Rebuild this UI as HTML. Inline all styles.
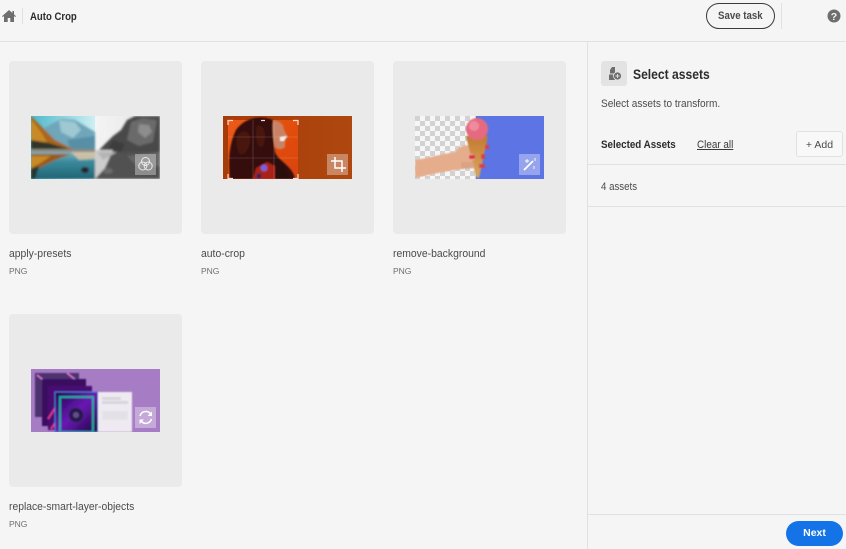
<!DOCTYPE html>
<html><head><meta charset="utf-8"><style>
html,body{margin:0;padding:0;background:#f5f5f5}
body{width:846px;height:549px;position:relative;overflow:hidden;font-family:"Liberation Sans",sans-serif;color:#2c2c2c}
.a{position:absolute;white-space:nowrap;transform-origin:0 0}
.card{position:absolute;width:173px;height:173px;background:#eaeaea;border-radius:4px}
.nm{font-size:11px;color:#4b4b4b;line-height:14px;transform:scaleX(.945)}
.ty{font-size:8.5px;color:#6e6e6e;line-height:10px}
.ln{position:absolute;background:#e1e1e1}
svg{position:absolute;overflow:hidden}
</style></head><body>
<div class="ln" style="left:0;top:41px;width:846px;height:1px"></div>
<div class="ln" style="left:587px;top:42px;width:1px;height:507px"></div>
<div class="ln" style="left:22px;top:8px;width:1px;height:16px"></div>
<div class="ln" style="left:781px;top:3px;width:1px;height:26px"></div>
<svg style="left:2px;top:10px" width="14" height="12" viewBox="0 0 14 12"><path fill="#6e6e6e" d="M7 0 0 6.200 .8 7 2 6V12H5.700V8H8.300V12H12V6L13.200 7 14 6.200 12 4.400V1H10.400V3Z"/></svg>
<div class="a" style="left:30px;top:10px;font-size:11px;line-height:14px;font-weight:bold;color:#2c2c2c;transform:scaleX(.87)">Auto Crop</div>
<div class="a" style="left:706px;top:3px;width:67px;height:24px;border:1px solid #3a3a3a;border-radius:13px"></div>
<div class="a" style="left:718px;top:9px;font-size:11px;line-height:14px;font-weight:bold;color:#4b4b4b;transform:scaleX(.88)">Save task</div>
<svg style="left:827px;top:9px" width="14" height="14" viewBox="0 0 14 14"><circle cx="7" cy="7" r="6.500" fill="#6e6e6e"/><text x="7" y="11" font-size="10.500" font-weight="bold" text-anchor="middle" fill="#f5f5f5" font-family="Liberation Sans">?</text></svg>

<div class="card" style="left:9px;top:61px"></div>
<div class="card" style="left:201px;top:61px"></div>
<div class="card" style="left:393px;top:61px"></div>
<div class="card" style="left:9px;top:314px"></div>

<!-- image 1 -->
<svg style="left:31px;top:116px" width="129" height="63" viewBox="0 0 129 63">
<defs><linearGradient id="sky" x1="0" y1="0" x2="1" y2="0"><stop offset="0" stop-color="#4db8cc"/><stop offset="1" stop-color="#cdeff2"/></linearGradient>
<linearGradient id="wat" x1="0" y1="0" x2="0" y2="1"><stop offset="0" stop-color="#8fbcc4"/><stop offset=".4" stop-color="#3a8a9c"/><stop offset="1" stop-color="#1f6474"/></linearGradient>
<linearGradient id="gs" x1="0" y1="0" x2="1" y2="0"><stop offset="0" stop-color="#f4f4f4"/><stop offset="1" stop-color="#e4e4e4"/></linearGradient>
<filter id="b1" x="-5%" y="-5%" width="110%" height="110%"><feGaussianBlur stdDeviation="1"/></filter><filter id="bi"><feGaussianBlur stdDeviation=".3"/></filter></defs>
<rect width="64" height="63" fill="url(#sky)"/>
<rect x="64" width="65" height="63" fill="url(#gs)"/>
<g filter="url(#b1)">
<path d="M10 14 20 8 30 3 44 4 54 10 64 16V35H10Z" fill="#6fa6ba"/>
<path d="M28 4 44 6 50 14 42 22 30 16Z" fill="#9ec8d2"/>
<path d="M36 24 64 20V34H40Z" fill="#568fa6"/>
<path d="M0 0 10 10 24 24 42 33H0Z" fill="#a8661a"/>
<path d="M0 3 10 16 16 26 0 26Z" fill="#c98a26"/>
<path d="M0 24 18 27 38 33 0 35Z" fill="#33352a"/>
<rect y="34" width="64" height="29" fill="url(#wat)"/>
<rect y="33" width="64" height="3" fill="#8c8a80"/>
<path d="M0 38H40L24 44 12 50 0 56Z" fill="#9a5a18"/>
<path d="M0 40 20 40 8 48 0 52Z" fill="#c88a26"/>
<path d="M0 53 8 50 4 63H0Z" fill="#26342f"/>
<path d="M40 36H64V43L48 44Z" fill="#e3c8a8" opacity=".8"/>
<ellipse cx="54" cy="54" rx="4" ry="3" fill="#2b2226"/>
<path d="M66 36 74 28 82 20 90 14 96 4 104 0H129V36Z" fill="#484848"/>
<path d="M100 6 112 2 126 4 122 26 108 30 96 24Z" fill="#6a6a6a"/>
<path d="M108 8l10 1 3 7-7 6-7-6Z" fill="#8d8d8d"/>
<path d="M82 24l12 4-4 8H76Z" fill="#3c3c3c"/>
<rect x="64" y="36" width="65" height="27" fill="#515151"/>
<path d="M64 34H82L74 52 64 63Z" fill="#cdcdcd"/>
<path d="M66 36H86L72 44Z" fill="#b5b5b5"/>
<path d="M96 40 129 36V50L108 52Z" fill="#666"/>
<ellipse cx="77" cy="55" rx="5" ry="3" fill="#6a6a6a"/>
</g>
<rect x="104" y="38" width="21" height="21" fill="#fff" opacity=".35"/>
<g filter="url(#bi)" fill="none" stroke="#fff" stroke-width="1" opacity=".8"><circle cx="114.500" cy="45.500" r="4"/><circle cx="111.800" cy="50" r="4"/><circle cx="117.200" cy="50" r="4"/></g>
</svg>

<!-- image 2 -->
<svg style="left:223px;top:116px" width="129" height="63" viewBox="0 0 129 63">
<defs><linearGradient id="or" x1="0" y1="0" x2="1" y2="0"><stop offset="0" stop-color="#a83c08"/><stop offset="1" stop-color="#ae4710"/></linearGradient>
<linearGradient id="pn" x1="0" y1="0" x2="1" y2="1"><stop offset="0" stop-color="#ee5a14"/><stop offset="1" stop-color="#d8420c"/></linearGradient>
<filter id="b2" x="-5%" y="-5%" width="110%" height="110%"><feGaussianBlur stdDeviation=".9"/></filter><filter id="bj"><feGaussianBlur stdDeviation=".3"/></filter></defs>
<rect width="129" height="63" fill="url(#or)"/>
<rect x="5" y="4" width="70" height="59" fill="url(#pn)" filter="url(#bj)"/>
<g filter="url(#b2)">
<path d="M7 63C5 46 6 28 13 14 22 1 38-1 50 4 50 14 50 26 52 36 54 44 70 50 72 63Z" fill="#351108"/>
<path d="M14 20C22 10 30 18 26 30 20 44 12 40 14 20ZM34 10C42 8 44 20 40 30 34 34 32 20 34 10Z" fill="#4a160a"/>
<path d="M50 5C56 4 61 8 61 14L65 21 62 24 62 31C58 35 54 33 52 31 50 22 49 13 50 5Z" fill="#c98264"/>
<path d="M57 21l7-1-3 5-4 0z" fill="#f6ecec"/>
<path d="M30 63 33 52 44 46 52 50 54 63Z" fill="#a92312"/>
<circle cx="41" cy="52" r="3.500" fill="#7d5fd4"/>
<circle cx="36" cy="60" r="2.500" fill="#302060"/>
<path d="M52 40 60 48 66 63H52Z" fill="#2a0a08"/>
</g>
<g stroke="#fff" stroke-width=".6" opacity=".25"><path d="M5 21H75M5 42H75M30 4V63M51 4V63"/></g>
<g filter="url(#bj)"><path d="M5 9V4.500H10M70 4.500H75V9M5 58V62.500H10M75 58V62.500H70M38 4.500H42" fill="none" stroke="#f5dcd0" stroke-width="1.200"/></g>
<rect x="104" y="38" width="21" height="21" fill="#fff" opacity=".35"/>
<path filter="url(#bj)" d="M108 45H119V56M112 41V52H123" fill="none" stroke="#fff" stroke-width="1.500"/>
</svg>

<!-- image 3 -->
<svg style="left:415px;top:116px" width="129" height="63" viewBox="0 0 129 63">
<defs><pattern id="chk" width="10" height="10" patternUnits="userSpaceOnUse"><rect width="10" height="10" fill="#f6f6f6"/><rect width="5" height="5" fill="#d2d2d2"/><rect x="5" y="5" width="5" height="5" fill="#d2d2d2"/></pattern>
<linearGradient id="cone" x1="0" y1="0" x2="0" y2="1"><stop offset="0" stop-color="#c47a30"/><stop offset="1" stop-color="#d8a860"/></linearGradient>
<filter id="b3" x="-5%" y="-5%" width="110%" height="110%"><feGaussianBlur stdDeviation=".7"/></filter><filter id="bk"><feGaussianBlur stdDeviation=".35"/></filter></defs>
<rect width="62" height="63" fill="url(#chk)" filter="url(#bk)"/>
<rect x="61" width="68" height="63" fill="#5c74e4"/>
<g filter="url(#b3)">
<path d="M0 44C14 42 26 38 40 36 44 30 50 28 54 30L58 36V50L48 53C30 55 14 59 0 62Z" fill="#e6ad8c"/>
<path d="M51 20H73L64 62 61 61Z" fill="url(#cone)"/>
<path d="M70 29h4v4h-4zM66 38h4v5h-4zM64 48h6v4h-6z" fill="#d8404e"/>
<path d="M44 37 58 38 60 44 46 46Z" fill="#e6ad8c"/>
<path d="M46 46 58 46 60 52 46 53Z" fill="#dba284"/>
<circle cx="62" cy="13" r="11" fill="#e56a80"/>
<circle cx="59" cy="10" r="5" fill="#ef8c9c"/>
<rect x="54" y="39" width="6" height="4" rx="1.500" fill="#e02a55"/>
</g>
<rect x="104" y="38" width="21" height="21" fill="#fff" opacity=".35"/>
<g filter="url(#bj)"><path d="M109 54 118 45" stroke="#fff" stroke-width="1.800"/>
<path d="M112 43v4M110 45h4M120 42v3M119 50v3" stroke="#fff" stroke-width=".9"/></g>
</svg>

<!-- image 4 -->
<svg style="left:31px;top:369px" width="129" height="63" viewBox="0 0 129 63">
<defs><linearGradient id="nn" x1="0" y1="0" x2="1" y2="1"><stop offset="0" stop-color="#18094a"/><stop offset=".5" stop-color="#6a16b4"/><stop offset="1" stop-color="#1a0a3a"/></linearGradient>
<filter id="b4" x="-5%" y="-5%" width="110%" height="110%"><feGaussianBlur stdDeviation=".7"/></filter></defs>
<rect width="129" height="63" fill="#a67cc4"/>
<g filter="url(#b4)">
<rect x="4" y="4" width="44" height="44" fill="#4e3270"/>
<path d="M6 6 16 14M36 4 46 12" stroke="#d878d0" stroke-width="1.500"/>
<rect x="11" y="10" width="44" height="47" fill="#3a1060"/>
<rect x="17" y="17" width="44" height="44" fill="#4a0f72"/>
<path d="M17 50 30 30M20 60 30 46" stroke="#e0358a" stroke-width="2"/>
<rect x="24" y="23" width="43" height="40" fill="url(#nn)"/>
<rect x="29" y="28" width="33" height="35" fill="none" stroke="#1aa8a0" stroke-width="2"/>
<circle cx="45" cy="46" r="7" fill="#241a4a"/><circle cx="45" cy="46" r="3" fill="#6a4a90"/>
<rect x="24" y="23" width="43" height="40" fill="none" stroke="#4a7ae0" stroke-width="1"/>
<rect x="67" y="23" width="34" height="40" fill="#efeaf2"/>
<rect x="71" y="28" width="19" height="3" fill="#d9d6db"/>
<rect x="71" y="32" width="26" height="3" fill="#d9d6db"/>
<rect x="71" y="42" width="26" height="9" fill="#e4e1e6"/>
</g>
<rect x="104" y="38" width="21" height="21" fill="#fff" opacity=".35"/>
<g filter="url(#bj)"><path d="M109 47A6 6 0 0 1 120 45.500M120.500 50A6 6 0 0 1 110 52" fill="none" stroke="#fff" stroke-width="1.500"/>
<path d="M121 42.500V47H116.500Z M108.500 55V50.500H113Z" fill="#fff"/></g>
</svg>

<div class="a nm" style="left:9px;top:247px">apply-presets</div>
<div class="a ty" style="left:9px;top:266px">PNG</div>
<div class="a nm" style="left:201px;top:247px">auto-crop</div>
<div class="a ty" style="left:201px;top:266px">PNG</div>
<div class="a nm" style="left:393px;top:247px">remove-background</div>
<div class="a ty" style="left:393px;top:266px">PNG</div>
<div class="a nm" style="left:9px;top:500px;transform:scaleX(.94)">replace-smart-layer-objects</div>
<div class="a ty" style="left:9px;top:519px">PNG</div>

<div class="a" style="left:601px;top:61px;width:26px;height:25px;background:#e3e3e3;border-radius:3px"></div>
<svg style="left:608px;top:66px" width="14" height="15" viewBox="0 0 14 15"><path fill="#6e6e6e" d="M4 1H7V7.500H2V4ZM1 8.500H7V14H1Z"/><circle cx="9.500" cy="10" r="4" fill="#6e6e6e" stroke="#e3e3e3" stroke-width=".8"/><path d="M9.500 8V12M7.500 10H11.500" stroke="#e3e3e3" stroke-width=".9"/></svg>
<div class="a" style="left:633px;top:66px;font-size:14px;line-height:17px;font-weight:bold;color:#2c2c2c;transform:scaleX(.865)">Select assets</div>
<div class="a" style="left:601px;top:97px;font-size:11px;line-height:14px;color:#4b4b4b;transform:scaleX(.915)">Select assets to transform.</div>
<div class="a" style="left:601px;top:138px;font-size:11px;line-height:14px;font-weight:bold;color:#2c2c2c;transform:scaleX(.89)">Selected Assets</div>
<div class="a" style="left:697px;top:138px;font-size:11px;line-height:14px;color:#3a3a3a;text-decoration:underline;transform:scaleX(.9)">Clear all</div>
<div class="a" style="left:796px;top:131px;width:45px;height:24px;border:1px solid #e1e1e1;border-radius:3px;background:#f8f8f8;text-align:center;font-size:10.500px;line-height:26px;color:#4b4b4b">+ Add</div>
<div class="a" style="display:none"></div>
<div class="ln" style="left:588px;top:164px;width:258px;height:1px"></div>
<div class="a" style="left:601px;top:180px;font-size:11px;line-height:14px;color:#4b4b4b;transform:scaleX(.88)">4 assets</div>
<div class="ln" style="left:588px;top:206px;width:258px;height:1px"></div>
<div class="ln" style="left:588px;top:514px;width:258px;height:1px"></div>
<div class="a" style="left:786px;top:521px;width:57px;height:25px;border-radius:13px;background:#1473e6;color:#fff;text-align:center;font-size:10.500px;line-height:24px;font-weight:bold">Next</div>
</body></html>
